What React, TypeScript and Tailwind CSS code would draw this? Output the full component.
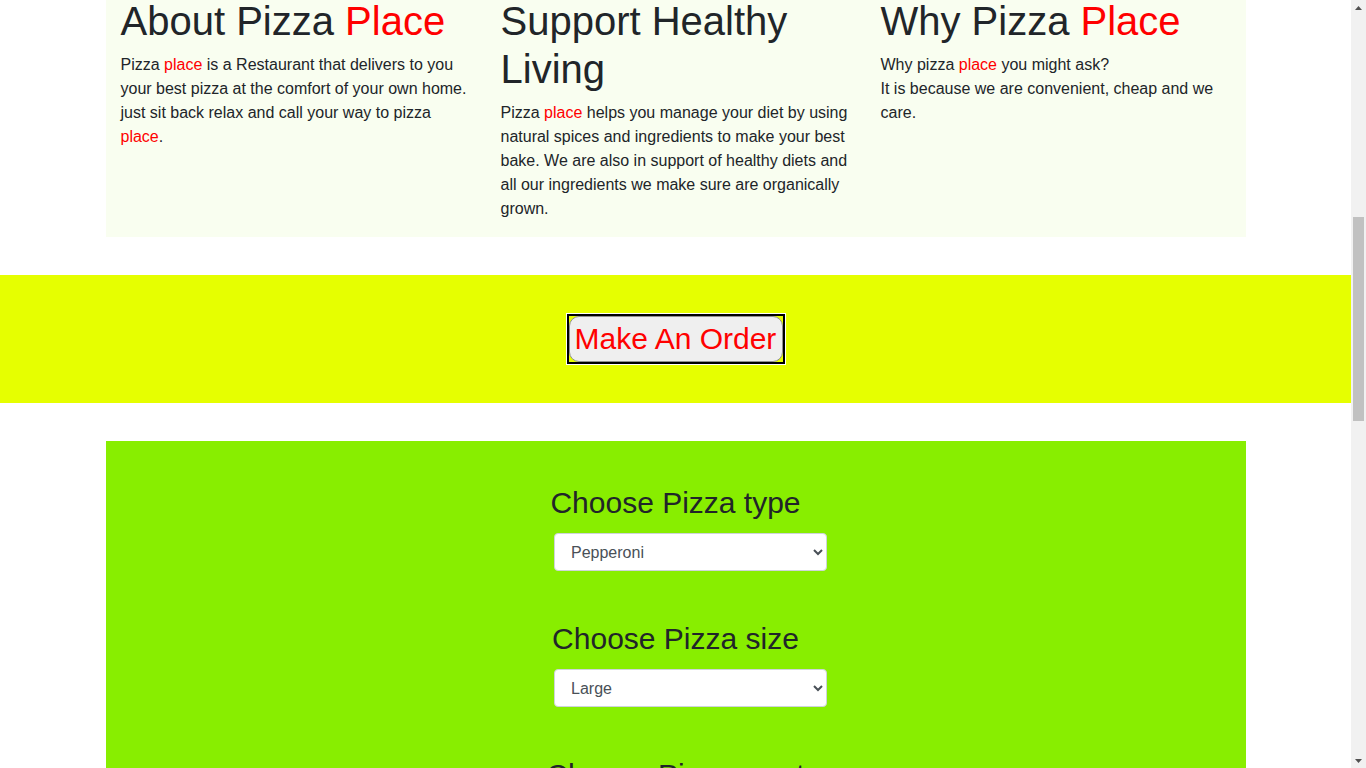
import React from "react";

const R = ({ children }: { children: React.ReactNode }) => (
  <span className="text-[#ff0000]">{children}</span>
);

function Field({ label, value, options }: { label: string; value: string; options: string[] }) {
  return (
    <div className="flex flex-col items-center">
      <h3 className="text-[30px] leading-[36px] font-normal text-[#212529] mb-[12px]">{label}</h3>
      <select
        defaultValue={value}
        className="ml-[30px] w-[273px] h-[38px] px-[12px] bg-white border border-[#ced4da] rounded-[4px] text-[16px] text-[#495057]"
        style={{ fontFamily: '"Liberation Sans", Arial, sans-serif' }}
      >
        {options.map((o) => (
          <option key={o}>{o}</option>
        ))}
      </select>
    </div>
  );
}

function FakeScrollbar() {
  return (
    <div className="w-[15px] h-[768px] bg-[#f1f1f1] flex flex-col items-center shrink-0">
      <div className="h-[15px] w-full flex items-center justify-center">
        <svg width="7" height="4" viewBox="0 0 7 4">
          <path d="M0 4 L3.5 0 L7 4 Z" fill="#505050" />
        </svg>
      </div>
      <div className="h-[202px]" />
      <div className="w-[11px] h-[204px] bg-[#c1c1c1]" />
      <div className="flex-1" />
      <div className="h-[15px] w-full flex items-center justify-center">
        <svg width="7" height="4" viewBox="0 0 7 4">
          <path d="M0 0 L3.5 4 L7 0 Z" fill="#505050" />
        </svg>
      </div>
    </div>
  );
}

export default function App() {
  return (
    <div className="flex h-[768px] overflow-hidden bg-white">
      <div
        className="w-[1351px] shrink-0 text-[#212529] text-[16px] leading-[24px]"
        style={{ fontFamily: '"Liberation Sans", Arial, sans-serif' }}
      >
        <div className="w-[1140px] mx-auto bg-[#f9fef0] grid grid-cols-3 -mt-[3px]">
          <div className="px-[15px]">
            <h1 className="text-[40px] leading-[48px] font-normal mb-[8px]">
              About Pizza <R>Place</R>
            </h1>
            <p className="mb-[16px]">
              Pizza <R>place</R> is a Restaurant that delivers to you your best pizza at the comfort of your own home.
              just sit back relax and call your way to pizza <R>place</R>.
            </p>
          </div>
          <div className="px-[15px]">
            <h1 className="text-[40px] leading-[48px] font-normal mb-[8px]">Support Healthy Living</h1>
            <p className="mb-[16px]">
              Pizza <R>place</R> helps you manage your diet by using natural spices and ingredients to make your best
              bake. We are also in support of healthy diets and all our ingredients we make sure are organically grown.
            </p>
          </div>
          <div className="px-[15px]">
            <h1 className="text-[40px] leading-[48px] font-normal mb-[8px]">
              Why Pizza <R>Place</R>
            </h1>
            <p className="mb-[16px]">
              Why pizza <R>place</R> you might ask?
              <br />
              It is because we are convenient, cheap and we care.
            </p>
          </div>
        </div>

        <div className="mt-[38px] bg-[#e6ff00] py-[38px] flex justify-center">
          <span className="inline-flex p-[1px] bg-white">
            <span className="inline-flex border-2 border-black bg-[#e6ff00]">
              <button className="w-[214px] h-[46px] rounded-[10px] border border-[#8f8f8f] bg-[#efefef] text-[#ff0000] text-[30px] leading-none whitespace-nowrap flex items-center justify-center">
                Make An Order
              </button>
            </span>
          </span>
        </div>

        <div className="w-[1140px] mx-auto mt-[38px] bg-[#88ee00] pt-[44px] pb-[60px] flex flex-col gap-[50px]">
          <Field label="Choose Pizza type" value="Pepperoni" options={["Pepperoni", "Hawaiian", "Vegetarian", "Margherita"]} />
          <Field label="Choose Pizza size" value="Large" options={["Small", "Medium", "Large"]} />
          <Field label="Choose Pizza crust" value="Crispy" options={["Crispy", "Stuffed", "Gluten-free"]} />
          <Field label="Choose Pizza topping" value="Mushroom" options={["Mushroom", "Sausage", "Onions"]} />
        </div>
      </div>
      <FakeScrollbar />
    </div>
  );
}
